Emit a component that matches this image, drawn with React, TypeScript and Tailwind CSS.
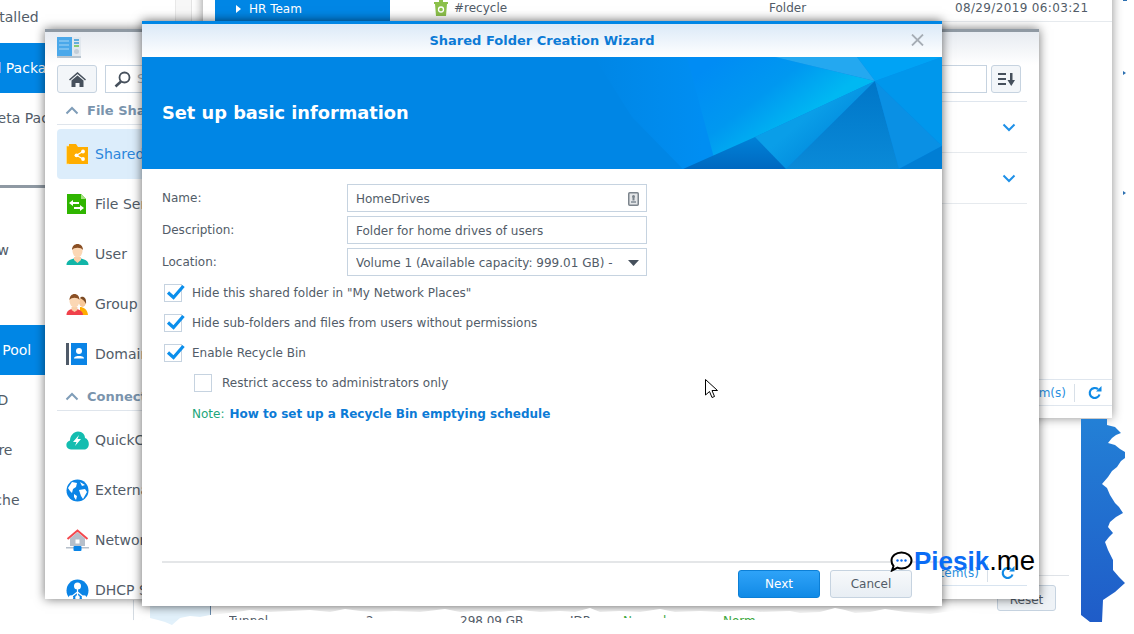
import type { ReactNode } from 'react';

const chartPoints =
  '1081,419 1107,419 1107,425 1115,427 1121,433 1116,435 1112,438 1108,443 1115,445 1120,449 1125,452 1125,458 1121,461 1117,467 1112,471 1108,477 1102,484 1107,488 1110,495 1115,503 1119,507 1123,513 1116,517 1110,522 1108,527 1113,533 1109,537 1105,542 1108,550 1113,560 1113,570 1119,577 1125,583 1115,592 1103,600 1102,622 1090,622 1081,615';

const tornEdge =
  '133,634 133,620 142,621 150,618 158,620 165,622 172,625 180,618 190,616 200,617 210,615 230,613 250,610 270,612 290,611 310,610 330,612 345,609 360,611 375,612 395,611 420,612 445,609 460,612 475,611 500,612 520,610 540,612 560,611 575,612 590,608 600,612 620,611 640,612 660,609 675,612 700,611 720,612 745,610 760,612 790,611 800,613 820,612 835,608 845,610 855,613 870,612 885,609 905,612 930,614 945,612 960,610 975,613 990,615 1010,613 1030,611 1045,612 1060,611 1075,613 1081,616 1090,623 1134,624 1134,634';

const tornRow = [
  { text: 'Tunnel', width: 'w-[137px]', height: 'h-[6px]', color: 'text-[#525c68]' },
  { text: '2', width: 'w-[94px]', height: 'h-[4px]', color: 'text-[#525c68]' },
  { text: '298.09 GB', width: 'w-[110px]', height: 'h-[9px]', color: 'text-[#525c68]' },
  { text: 'IDP', width: 'w-[53px]', height: 'h-[4px]', color: 'text-[#525c68]' },
  { text: 'Normal', width: 'w-[100px]', height: 'h-[4px]', color: 'text-[#3ea83e]' },
  { text: 'Norm', width: 'w-[40px]', height: 'h-[6px]', color: 'text-[#3ea83e]' },
];

function SharedFolderIcon() {
  return (
    <svg width="23" height="22" viewBox="0 0 23 22">
      <rect x="0.5" y="3" width="3" height="18" fill="#ffb000" stroke="#ffe9a8" strokeWidth="0.6" />
      <path d="M3 1h7l2 3h10v17H3z" fill="#ffad00" />
      <circle cx="17" cy="8.5" r="1.9" fill="#fff" />
      <circle cx="17" cy="16" r="1.9" fill="#fff" />
      <circle cx="10.5" cy="12.3" r="1.9" fill="#fff" />
      <path d="M17 8.5l-6.5 3.8 6.5 3.7" stroke="#fff" strokeWidth="1.2" fill="none" />
    </svg>
  );
}

function FileServicesIcon() {
  return (
    <svg width="22" height="22" viewBox="0 0 22 22">
      <path d="M1 1h14l5 5v15H1z" fill="#2fb500" />
      <path d="M15 1l5 5h-5z" fill="#a5e080" />
      <path d="M3 10l4-3v2h6v2H7v2zM18 15l-4 3v-2H8v-2h6v-2z" fill="#fff" />
    </svg>
  );
}

function UserIcon() {
  return (
    <svg width="23" height="23" viewBox="0 0 23 23">
      <path d="M0.5 22c0-4 3-5.5 7.5-6.5h7c4.500 1 7.500 2.500 7.500 6.500z" fill="#12b5a8" />
      <path d="M8 14h7v3l-3.500 3L8 17z" fill="#f9cfa8" />
      <ellipse cx="11.500" cy="8" rx="5" ry="6.500" fill="#fbd7b4" />
      <path d="M6 7c0-8 11-8 11 0-2-3-9-3-11 0z" fill="#8a4f24" />
    </svg>
  );
}

function GroupIcon() {
  return (
    <svg width="23" height="23" viewBox="0 0 23 23">
      <path d="M14 14c3 0 7.500 2 8 8h-8z" fill="#ffad00" />
      <ellipse cx="16.500" cy="9" rx="3.400" ry="5" fill="#f8c898" />
      <path d="M14 5c2-3 7-1 6 6-1-3-4-5-6-6z" fill="#7a4a24" />
      <path d="M0.500 22c0-4 2.500-5.500 6.500-6.500h3c3 1 7 2.500 7 6.500z" fill="#f0414b" />
      <path d="M5.500 14h6v3l-3 2-3-2z" fill="#f9cfa8" />
      <ellipse cx="8.500" cy="8" rx="5" ry="6.500" fill="#fbd7b4" />
      <path d="M3.500 7c0-8 10-8 10 0-2-3-8-3-10 0z" fill="#8a4f24" />
    </svg>
  );
}

function DomainIcon() {
  return (
    <svg width="21" height="22" viewBox="0 0 21 22">
      <rect x="0" y="0" width="3" height="22" fill="#4f5a68" />
      <rect x="5" y="0" width="16" height="22" fill="#0a84e6" />
      <circle cx="13" cy="8" r="3" fill="#fff" />
      <path d="M8 15.500c0-2 3-2.500 5-2.500s5 .500 5 2.500z" fill="#fff" />
    </svg>
  );
}

function QuickConnectIcon() {
  return (
    <svg width="23" height="19" viewBox="0 0 23 19">
      <path d="M5 18.500c-6 0-6-8-1-9 0-5 4-9 8-9 4.500 0 7 3 7 6.500 5 1 5.500 11.500-1 11.500z" fill="#14bdb0" />
      <path d="M13 4l-6 7h3.500L9 15l6-7h-3.500z" fill="#fff" />
    </svg>
  );
}

function GlobeIcon() {
  return (
    <svg width="23" height="23" viewBox="0 0 23 23">
      <circle cx="11.500" cy="11.500" r="11" fill="#0a84e6" />
      <path d="M6 3l5 1-1 4-3 2-1 4-2-2-2-3zM14 3l5 3-3 1zM13 11l6-1 2 3-4 7-2-3zM8 15l3 2-1 4-2-3z" fill="#fff" />
    </svg>
  );
}

function NetworkIcon() {
  return (
    <svg width="23" height="23" viewBox="0 0 23 23">
      <path d="M4 9.500L11.500 3 19 9.500V17H4z" fill="#b6bfca" />
      <rect x="9.500" y="10.500" width="4" height="4" fill="#fff" />
      <path d="M1.500 10L11.500 1.500 21.500 10" stroke="#f4484e" strokeWidth="2" fill="none" />
      <rect x="0" y="18" width="23" height="1.500" fill="#b6bfca" />
      <rect x="7.500" y="17" width="8" height="5" rx="1" fill="#0a84e6" />
    </svg>
  );
}

function DhcpIcon() {
  return (
    <svg width="23" height="23" viewBox="0 0 23 23">
      <circle cx="11.500" cy="11.500" r="11" fill="#0a84e6" />
      <circle cx="11.500" cy="7" r="3.500" fill="#fff" />
      <path d="M11.500 10v8M11.500 13L5 18M11.500 13l6 5" stroke="#fff" strokeWidth="1.200" />
      <circle cx="5" cy="18.500" r="2.300" fill="#fff" />
      <circle cx="11.500" cy="18.500" r="2.300" fill="#fff" />
      <circle cx="18" cy="18.500" r="2.300" fill="#fff" />
    </svg>
  );
}

function Chevron({ up }: { up?: boolean }) {
  return (
    <svg width="14" height="9" viewBox="0 0 14 9" className={up ? 'rotate-180' : ''}>
      <path d="M1.500 1.500L7 7l5.500-5.500" stroke={up ? '#7f9db8' : '#1e90e8'} strokeWidth="2" fill="none" />
    </svg>
  );
}

function RefreshIcon() {
  return (
    <svg width="14" height="14" viewBox="0 0 14 14">
      <path d="M11.500 8.500A5 5 0 1 1 10 3.200" stroke="#0f8ae6" strokeWidth="2.200" fill="none" />
      <path d="M8 5.500h5.500V0z" fill="#0f8ae6" />
    </svg>
  );
}

function SectionHeader({ label }: { label: string }) {
  return (
    <div className="h-[28px] flex items-center gap-[8px] pl-[8px] border-b border-[#dfe5ec] shrink-0">
      <Chevron up />
      <span className="text-[13px] font-bold text-[#7a94ad]">{label}</span>
    </div>
  );
}

function SideItem({ icon, label, active }: { icon: ReactNode; label: string; active?: boolean }) {
  return (
    <div
      className={`h-[50px] shrink-0 flex items-center rounded-[4px] pl-[9px] ${
        active ? 'bg-[#dcedfb] text-[#2a86dc]' : 'text-[#525c68]'
      }`}
    >
      <div className="w-[29px] shrink-0 flex">{icon}</div>
      <span className="text-[14px] whitespace-nowrap">{label}</span>
    </div>
  );
}

function Check({ checked }: { checked?: boolean }) {
  return (
    <div className="relative w-[18px] h-[18px] shrink-0 border border-[#c6d3e0] bg-white">
      {checked && (
        <svg width="20" height="17" viewBox="0 0 20 17" className="absolute left-[1px] top-[-1px]">
          <path d="M2 8.500l5.500 5L17.500 2" stroke="#0b8fec" strokeWidth="3.200" fill="none" />
        </svg>
      )}
    </div>
  );
}

function CheckRow({ label, checked, indent }: { label: string; checked?: boolean; indent?: boolean }) {
  return (
    <div className={`h-[30px] flex items-center gap-[10px] ml-[2px] ${indent ? 'pl-[30px]' : ''}`}>
      <Check checked={checked} />
      <span className="whitespace-nowrap">{label}</span>
    </div>
  );
}

function FormRow({ label, children }: { label: string; children: ReactNode }) {
  return (
    <div className="flex items-start h-[28px]">
      <div className="w-[185px] shrink-0 pt-[5px]">{label}</div>
      <div className="w-[300px] h-[28px] border border-[#c6d3e0] flex items-center pl-[8px] pr-[7px] pt-[1px] text-[#525c68]">
        {children}
      </div>
    </div>
  );
}

function BannerArt() {
  return (
    <svg viewBox="0 0 800 112" className="absolute inset-0 w-full h-full">
      <defs>
        <linearGradient id="band" gradientUnits="userSpaceOnUse" x1="672" y1="55" x2="610" y2="-25">
          <stop offset="0" stopColor="#00b8f2" />
          <stop offset="0.45" stopColor="#0098f0" />
          <stop offset="1" stopColor="#008cf4" />
        </linearGradient>
        <linearGradient id="fade" gradientUnits="userSpaceOnUse" x1="452" y1="0" x2="560" y2="0">
          <stop offset="0" stopColor="#0086e5" />
          <stop offset="1" stopColor="#008ef2" />
        </linearGradient>
        <linearGradient id="dark" x1="0" y1="0" x2="0" y2="1">
          <stop offset="0" stopColor="#0076c8" />
          <stop offset="1" stopColor="#0a8ad8" />
        </linearGradient>
        <linearGradient id="corner" x1="0" y1="0" x2="0" y2="1">
          <stop offset="0" stopColor="#0082d8" />
          <stop offset="1" stopColor="#0068c0" />
        </linearGradient>
        <linearGradient id="mid" gradientUnits="userSpaceOnUse" x1="670" y1="55" x2="700" y2="90">
          <stop offset="0" stopColor="#0a9ee8" />
          <stop offset="1" stopColor="#0088dc" />
        </linearGradient>
      </defs>
      <polygon points="452,0 560,0 600,112 541,112 490,60" fill="url(#fade)" />
      <polygon points="545,0 633,0 733,24 613,80 600,112 575,112" fill="url(#band)" />
      <polygon points="613,80 733,24 644,112 600,112" fill="url(#mid)" />
      <polygon points="541,112 613,80 644,112" fill="url(#corner)" />
      <polygon points="644,112 733,24 757,112" fill="url(#dark)" />
      <polygon points="733,24 800,89 757,112" fill="#0a90e4" />
      <polygon points="757,112 800,89 800,112" fill="#007ed4" />
      <polygon points="733,24 800,0 800,89" fill="#0097ec" />
      <polygon points="715,0 800,0 733,24" fill="#00a3f5" />
      <polygon points="633,0 715,0 733,24" fill="#24a8f0" />
    </svg>
  );
}

function BackgroundWindows() {
  return (
    <>
      {/* strip between the two back windows */}
      <div className="absolute left-[176px] top-0 w-[16px] h-[29px] bg-[#f7f7f7] border-r border-[#e4e4e4]" />

      {/* package center */}
      <div className="absolute left-[-12px] top-0 w-[188px] h-[185px] bg-white border-r border-[#e8e8e8] text-[14px] text-[#525c68] whitespace-nowrap">
        <div className="h-[43px] flex items-center pb-[8px] -ml-[9px]">Installed</div>
        <div className="h-[50px] flex items-center bg-[#0086e5] text-white pl-[3px]">
          <span className="-ml-[7px]">All Packages</span>
        </div>
        <div className="h-[50px] flex items-center">Beta Packages</div>
      </div>

      {/* storage manager sidebar */}
      <div className="absolute left-[-60px] top-[185px] w-[105px] h-[440px] bg-white border-t-[3px] border-[#8f99a3] text-[14px] text-[#525c68] pl-[3px] whitespace-nowrap">
        <div className="h-[37px]" />
        <div className="h-[50px] flex items-center">Overview</div>
        <div className="h-[50px] flex items-center">Volume</div>
        <div className="h-[50px] flex items-center bg-[#0086e5] text-white -ml-[3px] pl-[3px]">Storage Pool</div>
        <div className="h-[50px] flex items-center">HDD/SSD</div>
        <div className="h-[50px] flex items-center">Hot Spare</div>
        <div className="h-[50px] flex items-center">SSD Cache</div>
      </div>

      {/* file station */}
      <div className="absolute left-[203px] top-[-30px] w-[909px] h-[448px] bg-white shadow-[0_0_10px_rgba(0,0,0,0.45)] flex text-[12px] text-[#525c68]">
        <div className="pl-[12px] w-[205px] shrink-0">
          <div className="h-[30px]" />
          <div className="w-[175px] h-[21px] bg-[#0086e5] text-white flex items-center pl-[21px] pb-[4px] gap-[8px]">
            <svg width="5" height="8" viewBox="0 0 5 8">
              <path d="M0 0l5 4-5 4z" fill="#fff" />
            </svg>
            <span className="font-medium">HR Team</span>
          </div>
        </div>
        <div className="flex-1 flex flex-col pt-[30px] text-[#525c68]">
          <div className="h-[22px] flex items-center pl-[26px] pb-[5px] border-b border-[#e6eaee] shrink-0">
            <svg width="14" height="16" viewBox="0 0 14 16" className="shrink-0">
              <rect x="5" y="0" width="4" height="2" fill="#8cc04b" />
              <path d="M0 2h14v2h-1l-1 12H2L1 4H0z" fill="#8cc04b" />
              <circle cx="7" cy="9.500" r="2.500" stroke="#fff" strokeWidth="1.300" fill="none" />
            </svg>
            <span className="ml-[6px] w-[315px]">#recycle</span>
            <span className="w-[186px]">Folder</span>
            <span className="tracking-[0.35px]">08/29/2019 06:03:21</span>
          </div>
          <div className="flex-1" />
          <div className="h-[27px] border-y border-[#dfe6ee] flex items-center justify-end pr-[10px] text-[#2a8fe0] shrink-0">
            <span>0 item(s)</span>
            <div className="w-px h-[18px] bg-[#d8e0e8] ml-[8px] mr-[13px]" />
            <RefreshIcon />
          </div>
          <div className="h-[12px]" />
        </div>
      </div>

      {/* resource monitor strip */}
      <svg width="1134" height="634" viewBox="0 0 1134 634" className="absolute left-0 top-0">
        <defs>
          <linearGradient id="chart" x1="0" y1="0" x2="0" y2="1">
            <stop offset="0" stopColor="#2380d6" />
            <stop offset="1" stopColor="#1f5cc8" />
          </linearGradient>
        </defs>
        <polygon points={chartPoints} fill="url(#chart)" />
        <rect x="150" y="600" width="60" height="28" fill="#e2f1fb" />
        <rect x="210" y="600" width="1" height="24" fill="#6a8cac" />
        <rect x="133" y="600" width="1" height="24" fill="#d4dbe2" />
        <path d="M1123 0h4v1h-4zM1123 71l3 2-3 2zM1123 191l3 2-3 2z" fill="#2c6fb0" />
      </svg>
      <div className="absolute left-[1039px] top-[575px] w-[30px] h-px bg-[#dfe3e8]" />
      <div className="absolute left-[997px] top-[585px] w-[59px] h-[26px] rounded-[3px] border border-[#c6d3e0] bg-[#eff3f7] text-[12px] text-[#525c68] flex items-center justify-center pt-[4px]">
        Reset
      </div>
    </>
  );
}

function ControlPanel() {
  return (
    <div className="absolute left-[45px] top-[29px] w-[994px] h-[570px] bg-white border-t-[3px] border-[#8f99a3] shadow-[0_0_10px_rgba(0,0,0,0.55)] flex flex-col overflow-hidden">
      <div className="h-[33px] shrink-0 bg-gradient-to-b from-[#e7ebf1] to-white flex items-start pl-[12px] pt-[5px]">
        <svg width="24" height="21" viewBox="0 0 24 21">
          <rect x="0" y="0" width="15" height="19" fill="#4aa8ea" />
          <rect x="15" y="0" width="9" height="19" fill="#e2e8ee" />
          <rect x="0" y="19" width="24" height="2" fill="#b8c4cf" />
          <path d="M2 4h10M2 8h10M2 12h10" stroke="#a5d6f6" strokeWidth="1" />
          <path d="M17 3h5M17 6h5" stroke="#3a9ad8" strokeWidth="1.500" />
          <path d="M17 9h5" stroke="#6ac04a" strokeWidth="1.500" />
          <circle cx="19.500" cy="14.500" r="2.500" fill="#c4ced8" />
        </svg>
      </div>

      <div className="h-[28px] shrink-0 flex justify-between pl-[12px] pr-[18px]">
        <div className="flex gap-[8px]">
          <div className="w-[40px] h-[28px] rounded-[3px] border border-[#c6d3e0] bg-[#f3f6f9] flex items-center justify-center">
            <svg width="17" height="15" viewBox="0 0 17 15">
              <path d="M8.500 0L17 7.500l-1 1-7.500-6.500L1 8.500l-1-1z" fill="#46505c" />
              <path d="M2.500 8.500L8.500 3.500l6 5V15h-4v-4h-4v4h-4z" fill="#46505c" />
            </svg>
          </div>
          <div className="w-[300px] h-[28px] border border-[#c6d3e0] flex items-center pl-[8px] text-[13px] text-[#a8b0b8]">
            <svg width="17" height="17" viewBox="0 0 17 17">
              <circle cx="10.500" cy="6.500" r="5" stroke="#46505c" strokeWidth="1.800" fill="none" />
              <path d="M7 10.500L1.500 15.500" stroke="#46505c" strokeWidth="2.600" />
            </svg>
            <span className="ml-[6px]">Search</span>
          </div>
        </div>
        <div className="flex gap-[4px]">
          <div className="w-[300px] h-[28px] border border-[#c6d3e0]" />
          <div className="w-[30px] h-[28px] rounded-[3px] border border-[#c6d3e0] bg-[#f3f6f9] flex items-center justify-center">
            <svg width="17" height="13" viewBox="0 0 17 13">
              <path d="M0 1h8M0 6h8M0 11h8" stroke="#46505c" strokeWidth="2" />
              <path d="M12 0h2.500v7H17l-3.750 6L9.500 7H12z" fill="#46505c" />
            </svg>
          </div>
        </div>
      </div>

      <div className="flex-1 min-h-0 flex pl-[12px] pr-[12px] pt-[8px]">
        <div className="w-[190px] shrink-0 flex flex-col overflow-hidden -mt-[4px]">
          <SectionHeader label="File Sharing" />
          <div className="h-[4px] shrink-0" />
          <SideItem active icon={<SharedFolderIcon />} label="Shared Folder" />
          <SideItem icon={<FileServicesIcon />} label="File Services" />
          <SideItem icon={<UserIcon />} label="User" />
          <SideItem icon={<GroupIcon />} label="Group" />
          <SideItem icon={<DomainIcon />} label="Domain/LDAP" />
          <div className="h-[4px] shrink-0" />
          <SectionHeader label="Connectivity" />
          <div className="h-[4px] shrink-0" />
          <SideItem icon={<QuickConnectIcon />} label="QuickConnect" />
          <SideItem icon={<GlobeIcon />} label="External Access" />
          <SideItem icon={<NetworkIcon />} label="Network" />
          <SideItem icon={<DhcpIcon />} label="DHCP Server" />
        </div>

        <div className="flex-1 flex flex-col border-t border-[#dfe6ee]">
          <div className="h-[51px] shrink-0 border-b border-[#e6eaee] flex items-center justify-end pr-[11px]">
            <Chevron />
          </div>
          <div className="h-[51px] shrink-0 border-b border-[#e6eaee] flex items-center justify-end pr-[11px]">
            <Chevron />
          </div>
          <div className="flex-1" />
          <div className="h-[26px] shrink-0 border-b border-[#d8e4f0] flex items-center justify-end pr-[12px] pt-[1px] text-[12px] text-[#2a8fe0]">
            <span>0 item(s)</span>
            <div className="w-px h-[18px] bg-[#d8e0e8] ml-[8px] mr-[13px]" />
            <RefreshIcon />
          </div>
          <div className="h-[13px] shrink-0" />
        </div>
      </div>
    </div>
  );
}

function WizardDialog() {
  return (
    <div className="absolute left-[142px] top-[21px] w-[800px] h-[585px] bg-white border-t-[3px] border-[#0086e5] shadow-[0_0_10px_rgba(0,0,0,0.6)] flex flex-col text-[12px] text-[#525c68]">
      <div className="h-[33px] shrink-0 bg-gradient-to-b from-[#dbe9f7] to-white flex items-center justify-center relative">
        <span className="text-[13px] font-bold text-[#0c7bd6]">Shared Folder Creation Wizard</span>
        <svg width="13" height="12" viewBox="0 0 13 12" className="absolute right-[18px] top-[10px]">
          <path d="M1 0.500l11 11M12 0.500l-11 11" stroke="#a6adb5" strokeWidth="1.800" />
        </svg>
      </div>

      <div className="h-[112px] shrink-0 bg-[#0086e5] relative overflow-hidden flex items-center pl-[20px] pt-[1px]">
        <BannerArt />
        <span className="relative text-[17.800px] font-bold text-white">Set up basic information</span>
      </div>

      <div className="flex-1 flex flex-col pl-[20px] pt-[15px]">
        <div className="flex flex-col gap-[4px]">
          <FormRow label="Name:">
            <span className="flex-1">HomeDrives</span>
            <svg width="11" height="14" viewBox="0 0 11 14">
              <rect x="0.750" y="0.750" width="9.500" height="12.500" rx="1" fill="#e4e6e8" stroke="#7c848c" strokeWidth="1.500" />
              <circle cx="5.500" cy="4.500" r="1.500" fill="#7c848c" />
              <rect x="4.500" y="5.500" width="2" height="3" fill="#7c848c" />
              <rect x="3" y="9" width="5" height="2" fill="#9aa2aa" />
            </svg>
          </FormRow>
          <FormRow label="Description:">
            <span>Folder for home drives of users</span>
          </FormRow>
          <FormRow label="Location:">
            <span className="flex-1 whitespace-nowrap overflow-hidden">Volume 1 (Available capacity: 999.01 GB) -</span>
            <svg width="11" height="6" viewBox="0 0 11 6" className="ml-[8px] shrink-0">
              <path d="M0 0h11L5.500 6z" fill="#46505c" />
            </svg>
          </FormRow>
        </div>

        <div className="mt-[2px] flex flex-col">
          <CheckRow checked label={'Hide this shared folder in "My Network Places"'} />
          <CheckRow checked label="Hide sub-folders and files from users without permissions" />
          <CheckRow checked label="Enable Recycle Bin" />
          <CheckRow indent label="Restrict access to administrators only" />
          <div className="h-[30px] flex items-center pl-[30px] gap-[5px] pt-[1px]">
            <span className="text-[#1ca67a]">Note:</span>
            <span className="font-bold text-[#0c7bd6]">How to set up a Recycle Bin emptying schedule</span>
          </div>
        </div>
      </div>

      <div className="h-[45px] shrink-0 ml-[20px] border-t-2 border-[#e4e6e8] flex items-start justify-end gap-[10px] pr-[30px] pt-[7px]">
        <div className="w-[82px] h-[28px] rounded-[3px] border border-[#0c7fd6] bg-gradient-to-b from-[#2ea3f8] to-[#0f8ae6] text-white flex items-center justify-center">
          Next
        </div>
        <div className="w-[82px] h-[28px] rounded-[3px] border border-[#c6d3e0] bg-gradient-to-b from-[#f7f9fb] to-[#e8eef4] flex items-center justify-center">
          Cancel
        </div>
      </div>
    </div>
  );
}

export default function App() {
  return (
    <div className="relative w-[1134px] h-[634px] overflow-hidden bg-white font-['DejaVu_Sans',sans-serif]">
      <BackgroundWindows />
      <ControlPanel />
      <WizardDialog />

      {/* torn edge of the screenshot */}
      <svg width="1134" height="634" viewBox="0 0 1134 634" className="absolute left-0 top-0 pointer-events-none">
        <polygon points={tornEdge} fill="#fff" />
      </svg>

      {/* table row fragment left by the tear */}
      <div className="absolute left-[229px] top-[614px] flex text-[12px] leading-[14px] whitespace-nowrap">
        {tornRow.map((cell, i) => (
          <div key={i} className={`${cell.width} ${cell.height} ${cell.color} overflow-hidden`}>
            {cell.text}
          </div>
        ))}
      </div>

      {/* mouse pointer */}
      <svg width="14" height="20" viewBox="0 0 14 20" className="absolute left-[705px] top-[379px]">
        <path d="M0.500 0.500V16l4-3.500 2.500 6 2.500-1-2.500-6H12.500z" fill="#fff" stroke="#000" strokeWidth="1" />
      </svg>

      {/* watermark */}
      <div className="absolute left-[890px] top-[546px] flex items-center">
        <svg width="23" height="21" viewBox="0 0 23 21">
          <path
            d="M11.500 1.500c5.500 0 10 3.500 10 8s-4.500 8-10 8c-1.500 0-3-.300-4-.800L2 19.500l1.500-4.500C2 13.500 1.500 11.500 1.500 9.500c0-4.500 4.500-8 10-8z"
            fill="#fff"
            stroke="#000"
            strokeWidth="2"
          />
          <circle cx="7.500" cy="9.500" r="1.200" fill="#0a6cf5" />
          <circle cx="11.500" cy="9.500" r="1.200" fill="#0a6cf5" />
          <circle cx="15.500" cy="9.500" r="1.200" fill="#0a6cf5" />
        </svg>
        <span className="ml-[1px] text-[26px] leading-[30px] font-['Liberation_Sans',sans-serif]">
          <span className="font-bold text-[#0a6cf5]">Piesik</span>
          <span className="text-black text-[27.500px]">.me</span>
        </span>
      </div>
    </div>
  );
}
